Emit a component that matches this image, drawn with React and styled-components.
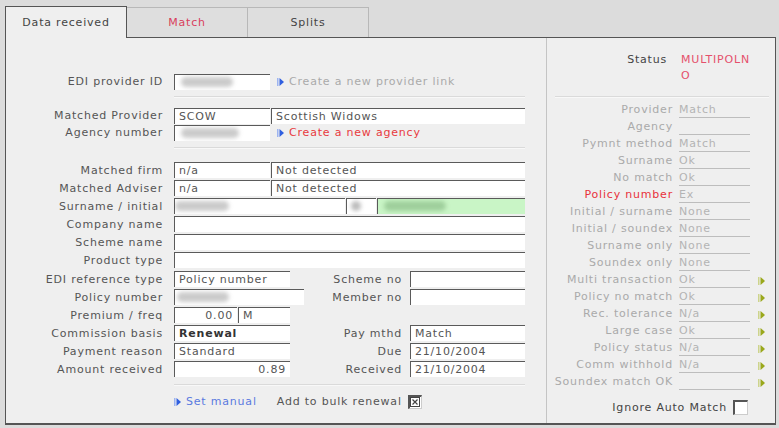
import React from "react";
import styled, { createGlobalStyle } from "styled-components";

const GlobalStyle = createGlobalStyle`
  html, body { margin: 0; padding: 0; background: #dcdcdc; }
  body {
    font-family: "DejaVu Sans", Verdana, sans-serif;
    font-size: 11px;
    letter-spacing: 0.8px;
    color: #555;
  }
`;

const Page = styled.div`
  width: 779px;
  height: 428px;
  box-sizing: border-box;
  padding: 6px 3px 0 5px;
  overflow: hidden;
`;

const TabBar = styled.div`
  display: flex;
  height: 31px;
`;

const Tab = styled.div`
  position: relative;
  z-index: ${(p) => (p.$active ? 2 : 1)};
  box-sizing: border-box;
  width: ${(p) => p.$w}px;
  height: ${(p) => (p.$active ? 32 : 30)}px;
  margin-top: ${(p) => (p.$active ? 0 : 1)}px;
  display: flex;
  align-items: center;
  justify-content: center;
  background: ${(p) => (p.$active ? "#efefef" : "#dedede")};
  border: 1px solid ${(p) => (p.$active ? "#555" : "#b8b8b8")};
  border-bottom: none;
  border-left: ${(p) => (p.$active ? "1px solid #555" : "none")};
  color: ${(p) => p.$color || "#444"};
`;

const Panel = styled.div`
  display: flex;
  box-sizing: border-box;
  width: 771px;
  height: 388px;
  background: #efefef;
  border: 1px solid #555;
  border-bottom: 2px solid #555;
`;

const LeftCol = styled.div`
  width: 540px;
  flex: none;
  padding-top: 35px;
`;

const RightCol = styled.div`
  flex: 1;
  border-left: 1px solid #c4c4c4;
  padding-top: 14px;
`;

const Row = styled.div`
  display: flex;
  align-items: center;
  height: ${(p) => p.$h || 18}px;
  margin-top: ${(p) => p.$mt || 0}px;
`;

const Label = styled.div`
  box-sizing: border-box;
  width: 168px;
  flex: none;
  padding-right: 11px;
  text-align: right;
  white-space: nowrap;
  color: #555;
`;

const SubLabel = styled.div`
  box-sizing: border-box;
  width: ${(p) => p.$w}px;
  flex: none;
  padding-right: 8px;
  text-align: right;
  white-space: nowrap;
  color: #555;
`;

const Cell = styled.div`
  display: flex;
  gap: 1px;
  width: ${(p) => p.$w}px;
  flex: none;
`;

const Field = styled.div`
  box-sizing: border-box;
  width: ${(p) => p.$w}px;
  height: 16px;
  flex: none;
  background: ${(p) => p.$bg || "#fff"};
  border-top: 1px solid #5a5a5a;
  border-left: 1px solid #5a5a5a;
  padding: 0 4px;
  line-height: 15px;
  white-space: nowrap;
  overflow: hidden;
  color: ${(p) => (p.$bold ? "#333" : "#555")};
  font-weight: ${(p) => (p.$bold ? 700 : 400)};
  text-align: ${(p) => (p.$right ? "right" : "left")};
`;

const Redacted = styled.span`
  display: inline-block;
  width: ${(p) => p.$w}px;
  height: 10px;
  margin-top: 2px;
  margin-left: ${(p) => p.$ml || 0}px;
  border-radius: 5px;
  background: ${(p) => p.$c || "#cbcbcb"};
  filter: blur(2px);
  vertical-align: top;
`;

const Divider = styled.div`
  width: ${(p) => p.$w || 351}px;
  margin: ${(p) => p.$m};
  border-top: 1px solid #dadada;
  border-bottom: 1px solid #f8f8f8;
`;

const LinkText = styled.span`
  display: inline-flex;
  align-items: center;
  gap: 5px;
  margin-left: ${(p) => p.$ml || 0}px;
  color: ${(p) => p.$color};
  white-space: nowrap;
`;

const BottomRow = styled.div`
  display: flex;
  align-items: center;
  height: 17px;
  margin-top: 7px;
  padding-left: 168px;
`;

const CheckLabel = styled.span`
  margin-left: ${(p) => p.$ml || 0}px;
  margin-right: 6px;
  color: ${(p) => p.$color || "#555"};
  white-space: nowrap;
`;

const Box = styled.div`
  box-sizing: border-box;
  width: ${(p) => p.$s}px;
  height: ${(p) => p.$s}px;
  background: #fff;
  border-top: 2px solid #555;
  border-left: 2px solid #555;
  border-right: 1px solid #ccc;
  border-bottom: 1px solid #ccc;
  display: flex;
  align-items: center;
  justify-content: center;
`;

const StatusRow = styled.div`
  display: flex;
  align-items: flex-start;
  line-height: 16px;
`;

const StatusLabel = styled.div`
  width: 120px;
  flex: none;
  text-align: right;
  color: #444;
`;

const StatusValue = styled.div`
  width: 74px;
  margin-left: 14px;
  word-break: break-all;
  color: #e5506c;
`;

const RRow = styled.div`
  display: flex;
  align-items: flex-start;
  height: 17px;
`;

const RLabel = styled.div`
  width: 126px;
  flex: none;
  display: flex;
  justify-content: flex-end;
  line-height: 15px;
  white-space: nowrap;
  color: ${(p) => (p.$red ? "#e8323c" : "#aaa")};
`;

const RValue = styled.div`
  box-sizing: border-box;
  width: 71px;
  height: 16px;
  margin-left: 6px;
  line-height: 15px;
  border-bottom: 1px solid #bdbdbd;
  color: #b4b4b4;
  white-space: nowrap;
`;

const ArrowSlot = styled.div`
  margin-left: 8px;
  padding-top: 3px;
`;

const IgnoreRow = styled.div`
  display: flex;
  align-items: center;
  justify-content: flex-end;
  height: 18px;
  margin-top: 7px;
  padding-right: 27px;
`;

const Arrow = ({ color, bar }) => (
  <svg width="7" height="8" viewBox="0 0 7 8">
    <rect x="0" y="0" width="1.5" height="8" fill={bar} />
    <polygon points="2.5,0 7,4 2.5,8" fill={color} />
  </svg>
);

const BlueArrow = () => <Arrow color="#2f5fe0" bar="#9db4f0" />;
const OliveArrow = () => <Arrow color="#9aa81c" bar="#cdd48c" />;

const rightRows = [
  ["Provider", "Match"],
  ["Agency", ""],
  ["Pymnt method", "Match"],
  ["Surname", "Ok"],
  ["No match", "Ok"],
  ["Policy number", "Ex", "red"],
  ["Initial / surname", "None"],
  ["Initial / soundex", "None"],
  ["Surname only", "None"],
  ["Soundex only", "None"],
  ["Multi transaction", "Ok", "arrow"],
  ["Policy no match", "Ok", "arrow"],
  ["Rec. tolerance", "N/a", "arrow"],
  ["Large case", "Ok", "arrow"],
  ["Policy status", "N/a", "arrow"],
  ["Comm withhold", "N/a", "arrow"],
  ["Soundex match OK", "", "arrow"],
];

export default function App() {
  return (
    <Page>
      <GlobalStyle />
      <TabBar>
        <Tab $w={122} $active>Data received</Tab>
        <Tab $w={121} $color="#d9405c">Match</Tab>
        <Tab $w={121}>Splits</Tab>
      </TabBar>
      <Panel>
        <LeftCol>
          <Row $h={17}>
            <Label>EDI provider ID</Label>
            <Field $w={96}><Redacted $w={52} $ml={2} /></Field>
            <LinkText $ml={7} $color="#aaa"><BlueArrow />Create a new provider link</LinkText>
          </Row>
          <Divider $m="6px 0 9px 168px" />

          <Row $h={17}>
            <Label>Matched Provider</Label>
            <Cell $w={351}>
              <Field $w={96}>SCOW</Field>
              <Field $w={254}>Scottish Widows</Field>
            </Cell>
          </Row>
          <Row $h={17}>
            <Label>Agency number</Label>
            <Field $w={96}><Redacted $w={58} $ml={2} /></Field>
            <LinkText $ml={7} $color="#e83a3e"><BlueArrow />Create a new agency</LinkText>
          </Row>
          <Divider $m="6px 0 12px 168px" />

          <Row>
            <Label>Matched firm</Label>
            <Cell $w={351}>
              <Field $w={96}>n/a</Field>
              <Field $w={254}>Not detected</Field>
            </Cell>
          </Row>
          <Row>
            <Label>Matched Adviser</Label>
            <Cell $w={351}>
              <Field $w={96}>n/a</Field>
              <Field $w={254}>Not detected</Field>
            </Cell>
          </Row>
          <Row>
            <Label>Surname / initial</Label>
            <Cell $w={351}>
              <Field $w={171}><Redacted $w={54} $ml={-4} /></Field>
              <Field $w={30}><Redacted $w={10} $c="#bbb" /></Field>
              <Field $w={148} $bg="#c9f5c6"><Redacted $w={62} $c="#9fcf9c" $ml={2} /></Field>
            </Cell>
          </Row>
          <Row>
            <Label>Company name</Label>
            <Field $w={351} />
          </Row>
          <Row>
            <Label>Scheme name</Label>
            <Field $w={351} />
          </Row>
          <Row>
            <Label>Product type</Label>
            <Field $w={351} />
          </Row>
          <Row $mt={1}>
            <Label>EDI reference type</Label>
            <Cell $w={158}><Field $w={116}>Policy number</Field></Cell>
            <SubLabel $w={78}>Scheme no</SubLabel>
            <Field $w={115} />
          </Row>
          <Row>
            <Label>Policy number</Label>
            <Cell $w={158}><Field $w={130}><Redacted $w={52} $ml={-2} /></Field></Cell>
            <SubLabel $w={78}>Member no</SubLabel>
            <Field $w={115} />
          </Row>
          <Row>
            <Label>Premium / freq</Label>
            <Cell $w={158}>
              <Field $w={63} $right>0.00</Field>
              <Field $w={52}>M</Field>
            </Cell>
          </Row>
          <Row>
            <Label>Commission basis</Label>
            <Cell $w={158}><Field $w={116} $bold>Renewal</Field></Cell>
            <SubLabel $w={78}>Pay mthd</SubLabel>
            <Field $w={115}>Match</Field>
          </Row>
          <Row>
            <Label>Payment reason</Label>
            <Cell $w={158}><Field $w={116}>Standard</Field></Cell>
            <SubLabel $w={78}>Due</SubLabel>
            <Field $w={115}>21/10/2004</Field>
          </Row>
          <Row>
            <Label>Amount received</Label>
            <Cell $w={158}><Field $w={116} $right>0.89</Field></Cell>
            <SubLabel $w={78}>Received</SubLabel>
            <Field $w={115}>21/10/2004</Field>
          </Row>
          <Divider $m="6px 0 0 168px" />

          <BottomRow>
            <LinkText $color="#5a7ae0"><BlueArrow />Set manual</LinkText>
            <CheckLabel $ml={20}>Add to bulk renewal</CheckLabel>
            <Box $s={14}>
              <svg width="10" height="10" viewBox="0 0 10 10">
                <rect x="0.5" y="0.5" width="9" height="9" fill="none" stroke="#444" />
                <path d="M2.5 2.5 L7.5 7.5 M7.5 2.5 L2.5 7.5" stroke="#444" strokeWidth="1.2" />
              </svg>
            </Box>
          </BottomRow>
        </LeftCol>

        <RightCol>
          <StatusRow>
            <StatusLabel>Status</StatusLabel>
            <StatusValue>MULTIPOLNO</StatusValue>
          </StatusRow>
          <Divider $w={214} $m="12px 0 4px 8px" />
          {rightRows.map(([label, value, kind]) => (
            <RRow key={label}>
              <RLabel $red={kind === "red"}><span>{label}</span></RLabel>
              <RValue>{value}</RValue>
              {kind === "arrow" && (
                <ArrowSlot><OliveArrow /></ArrowSlot>
              )}
            </RRow>
          ))}
          <IgnoreRow>
            <CheckLabel $color="#444">Ignore Auto Match</CheckLabel>
            <Box $s={15} />
          </IgnoreRow>
        </RightCol>
      </Panel>
    </Page>
  );
}
